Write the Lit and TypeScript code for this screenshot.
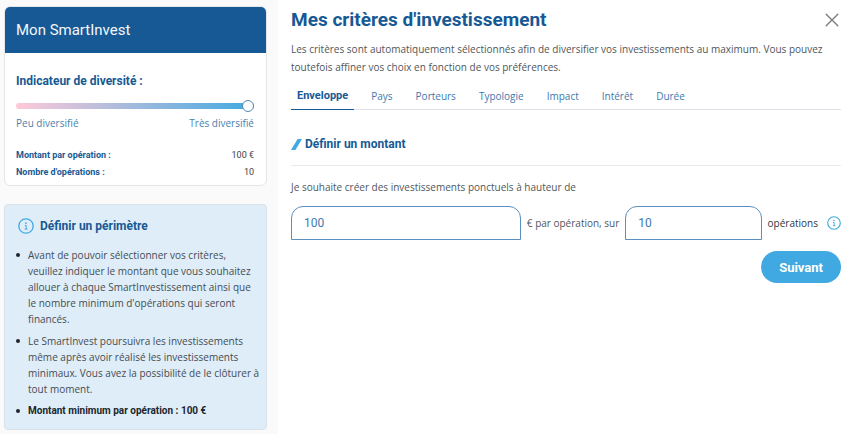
import { LitElement, html, css } from "lit";
import { customElement, property, state } from "lit/decorators.js";
import { classMap } from "lit/directives/class-map.js";

@customElement("info-icon")
class InfoIcon extends LitElement {
  static styles = css`
    :host {
      display: block;
      flex: none;
      width: 14px;
      height: 14px;
      color: #41a9e1;
    }
    :host([large]) {
      width: 16px;
      height: 16px;
    }
    .icon {
      display: block;
      width: 100%;
      height: 100%;
    }
  `;

  render() {
    return html`<svg class="icon" viewBox="0 0 16 16" fill="none" stroke="currentColor" aria-hidden="true">
      <circle cx="8" cy="8" r="7.2" stroke-width="1.3" />
      <circle cx="7.9" cy="5.1" r="0.9" fill="currentColor" stroke="none" />
      <path d="M6.8 7.4H8.2V11M6.7 11.1H9.6" stroke-width="1" />
    </svg>`;
  }
}

@customElement("summary-card")
class SummaryCard extends LitElement {
  @property({ type: Number }) amount = 100;
  @property({ type: Number }) operations = 10;

  static styles = css`
    :host {
      display: block;
      background: #fff;
      border: 1px solid #e3e5e8;
      border-radius: 6px;
      overflow: hidden;
    }
    .header {
      margin: 0;
      padding: 0 11px;
      background: #175994;
      color: #f2f7fb;
      font-family: Roboto, sans-serif;
      font-size: 15px;
      font-weight: 400;
      line-height: 46px;
    }
    .body {
      padding: 18px 12px 4px 11px;
    }
    .title {
      display: block;
      color: #175994;
      font-family: Roboto, sans-serif;
      font-size: 12px;
      font-weight: 700;
      line-height: 20px;
    }
    .slider {
      appearance: none;
      display: block;
      width: 100%;
      height: 12px;
      margin: 9px 0 3px;
      background: transparent;
    }
    .slider::-webkit-slider-runnable-track {
      height: 6px;
      border-radius: 3px;
      background: linear-gradient(90deg, #ffc9d9, #41a9e1);
    }
    .slider::-webkit-slider-thumb {
      appearance: none;
      box-sizing: border-box;
      width: 12px;
      height: 12px;
      margin-top: -3px;
      border: 1px solid #5588b5;
      border-radius: 50%;
      background: #fff;
    }
    .scale {
      display: flex;
      justify-content: space-between;
      color: #4a7faf;
      font-size: 10px;
      line-height: 16px;
    }
    .figures {
      width: 100%;
      margin-top: 16px;
      border-collapse: collapse;
      font-family: Roboto, sans-serif;
      font-size: 9px;
      line-height: 17px;
    }
    .name {
      padding: 0;
      color: #175994;
      font-weight: 700;
      text-align: left;
    }
    .value {
      padding: 0;
      color: #3b4147;
      text-align: right;
    }
  `;

  render() {
    return html`
      <h2 class="header">Mon SmartInvest</h2>
      <div class="body">
        <label class="title" for="diversity">Indicateur de diversité :</label>
        <input class="slider" id="diversity" type="range" min="0" max="100" value="100" />
        <div class="scale"><span>Peu diversifié</span><span>Très diversifié</span></div>
        <table class="figures">
          <tr><th class="name" scope="row">Montant par opération :</th><td class="value">${this.amount} €</td></tr>
          <tr><th class="name" scope="row">Nombre d'opérations :</th><td class="value">${this.operations}</td></tr>
        </table>
      </div>
    `;
  }
}

@customElement("help-card")
class HelpCard extends LitElement {
  static styles = css`
    :host {
      display: block;
      padding: 12px 4px 10px 11px;
      background: #dfedf8;
      border: 1px solid #d6e1ea;
      border-radius: 4px;
      color: #454c53;
    }
    .heading {
      display: flex;
      align-items: center;
      gap: 6px;
      padding-left: 2px;
      margin: 0 0 12px;
      color: #175994;
      font-family: Roboto, sans-serif;
      font-size: 12px;
      line-height: 18px;
    }
    .list {
      display: grid;
      gap: 6px;
      margin: 0;
      padding: 0;
      list-style: none;
      font-size: 10px;
      line-height: 16px;
    }
    .item {
      display: flex;
      gap: 8px;
    }
    .item::before {
      content: "";
      flex: none;
      width: 4px;
      height: 4px;
      margin-top: 6px;
      border-radius: 50%;
      background: #20262c;
    }
    .strong {
      color: #20262c;
      font-family: Roboto, sans-serif;
      font-weight: 700;
    }
  `;

  render() {
    return html`
      <h2 class="heading"><info-icon large></info-icon>Définir un périmètre</h2>
      <ul class="list">
        <li class="item">
          <span>
            Avant de pouvoir sélectionner vos critères,<br />
            veuillez indiquer le montant que vous souhaitez<br />
            allouer à chaque SmartInvestissement ainsi que<br />
            le nombre minimum d'opérations qui seront<br />
            financés.
          </span>
        </li>
        <li class="item">
          <span>
            Le SmartInvest poursuivra les investissements<br />
            même après avoir réalisé les investissements<br />
            minimaux. Vous avez la possibilité de le clôturer à<br />
            tout moment.
          </span>
        </li>
        <li class="item strong">Montant minimum par opération : 100 €</li>
      </ul>
    `;
  }
}

const TABS = ["Enveloppe", "Pays", "Porteurs", "Typologie", "Impact", "Intérêt", "Durée"];

@customElement("app-root")
class AppRoot extends LitElement {
  @state() private activeTab = 0;
  @state() private amount = 100;
  @state() private operations = 10;

  static styles = css`
    :host {
      display: grid;
      grid-template-columns: 278px minmax(0, 1fr);
      min-height: 100vh;
      background: #fff;
      color: #50565b;
      font-family: "Open Sans", "Liberation Sans", sans-serif;
      font-size: 10px;
    }
    .sidebar {
      display: flex;
      flex-direction: column;
      gap: 18px;
      padding: 6px 11px 4px 4px;
      background: #fafafa;
    }
    .main {
      padding: 6px 9px 12px 13px;
    }
    .top {
      display: flex;
      align-items: center;
      justify-content: space-between;
    }
    .title {
      margin: 0;
      color: #175994;
      font-family: Roboto, sans-serif;
      font-size: 19px;
      font-weight: 700;
      line-height: 28px;
    }
    .close {
      padding: 2px;
      border: 0;
      background: none;
      color: #7d7d7d;
      cursor: pointer;
    }
    .cross {
      display: block;
      width: 14px;
      height: 14px;
    }
    .intro {
      margin: 6px 0 7px;
      line-height: 18px;
    }
    .tabs {
      display: flex;
      gap: 11px;
      border-bottom: 1px solid #dde3e8;
    }
    .tab {
      margin-bottom: -1px;
      padding: 0 6px;
      border: 0;
      border-bottom: 1px solid transparent;
      background: none;
      color: #3f79ad;
      font: inherit;
      line-height: 26px;
      cursor: pointer;
    }
    .tab.active {
      border-color: #175994;
      color: #175994;
      font-family: Roboto, sans-serif;
      font-size: 11px;
      font-weight: 700;
    }
    .section {
      display: flex;
      align-items: center;
      gap: 3px;
      margin: 24px 0 0;
      padding-bottom: 11px;
      border-bottom: 1px solid #e8eaec;
      color: #175994;
      font-family: Roboto, sans-serif;
      font-size: 12px;
      line-height: 20px;
    }
    .slash {
      width: 11px;
      height: 11px;
    }
    .lead {
      margin: 13px 0 11px;
      line-height: 16px;
    }
    .fields {
      display: grid;
      grid-template-columns: minmax(0, 231fr) auto minmax(0, 137fr) auto auto;
      align-items: center;
    }
    .field {
      box-sizing: border-box;
      width: 100%;
      height: 34px;
      padding: 0 12px;
      border: 1px solid #5b8fbe;
      border-radius: 12px 12px 0 0;
      background: #fff;
      color: #3f79ad;
      font: inherit;
      font-family: Roboto, sans-serif;
      font-size: 12px;
    }
    .unit {
      padding: 0 6px;
      white-space: nowrap;
    }
    .unit.last {
      padding-right: 9px;
      color: #30363b;
    }
    .hint {
      padding: 0;
      border: 0;
      background: none;
    }
    .actions {
      display: flex;
      justify-content: flex-end;
      margin-top: 11px;
    }
    .next {
      height: 32px;
      padding: 0 18px;
      border: 0;
      border-radius: 16px;
      background: #41a9e1;
      color: #fff;
      font: inherit;
      font-family: Roboto, sans-serif;
      font-size: 13px;
      font-weight: 700;
      cursor: pointer;
    }
  `;

  render() {
    return html`
      <aside class="sidebar">
        <summary-card .amount=${this.amount} .operations=${this.operations}></summary-card>
        <help-card></help-card>
      </aside>
      <main class="main">
        <header class="top">
          <h1 class="title">Mes critères d'investissement</h1>
          <button class="close" type="button" aria-label="Fermer">
            <svg class="cross" viewBox="0 0 14 14" fill="none" stroke="currentColor" stroke-width="1.4" stroke-linecap="round">
              <path d="M1.2 1.2L12.8 12.8M12.8 1.2L1.2 12.8" />
            </svg>
          </button>
        </header>
        <p class="intro">
          Les critères sont automatiquement sélectionnés afin de diversifier vos investissements au maximum. Vous pouvez<br />
          toutefois affiner vos choix en fonction de vos préférences.
        </p>
        <nav class="tabs" role="tablist">
          ${TABS.map(
            (name, i) => html`<button
              class=${classMap({ tab: true, active: i === this.activeTab })}
              type="button"
              role="tab"
              aria-selected=${i === this.activeTab}
              @click=${() => (this.activeTab = i)}
            >${name}</button>`
          )}
        </nav>
        <h2 class="section">
          <svg class="slash" viewBox="0 0 11 11" aria-hidden="true">
            <path d="M0 11L6.6 0H11L4.4 11Z" fill="#41a9e1" />
          </svg>
          Définir un montant
        </h2>
        <p class="lead">Je souhaite créer des investissements ponctuels à hauteur de</p>
        <div class="fields">
          <input
            class="field"
            id="amount"
            inputmode="numeric"
            .value=${String(this.amount)}
            @change=${(e: Event) => (this.amount = Number((e.target as HTMLInputElement).value))}
          />
          <label class="unit" for="amount">€ par opération, sur</label>
          <input
            class="field"
            id="operations"
            inputmode="numeric"
            .value=${String(this.operations)}
            @change=${(e: Event) => (this.operations = Number((e.target as HTMLInputElement).value))}
          />
          <label class="unit last" for="operations">opérations</label>
          <button class="hint" type="button" aria-label="Aide"><info-icon></info-icon></button>
        </div>
        <div class="actions"><button class="next" type="button">Suivant</button></div>
      </main>
    `;
  }
}
